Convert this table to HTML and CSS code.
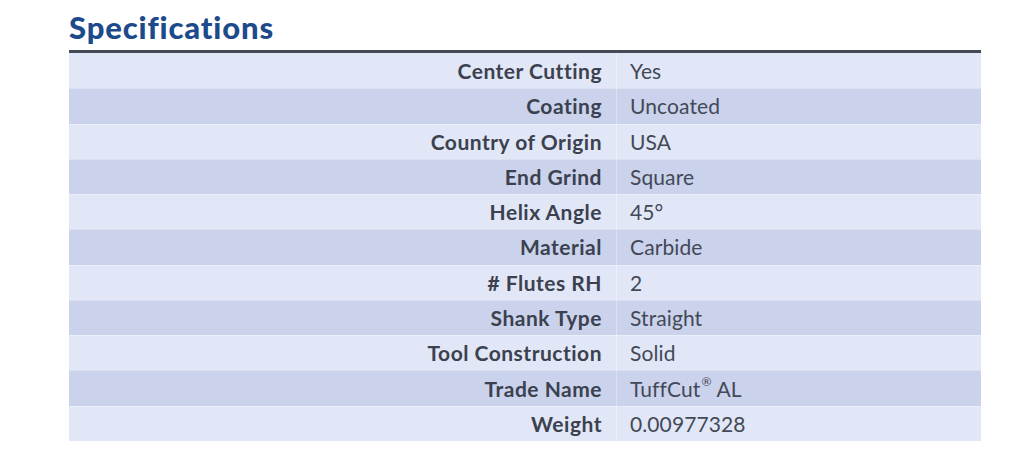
FILE: index.html
```html
<!DOCTYPE html>
<html lang="en">
<head>
<meta charset="utf-8">
<title>Specifications</title>
<link rel="stylesheet" href="styles.css">
</head>
<body>
<section class="specs">
  <h2 class="specs-title">Specifications</h2>
  <div class="specs-table">
    <div class="row"><div class="label">Center Cutting</div><div class="value">Yes</div></div>
    <div class="row"><div class="label">Coating</div><div class="value">Uncoated</div></div>
    <div class="row"><div class="label">Country of Origin</div><div class="value">USA</div></div>
    <div class="row"><div class="label">End Grind</div><div class="value">Square</div></div>
    <div class="row"><div class="label">Helix Angle</div><div class="value">45°</div></div>
    <div class="row"><div class="label">Material</div><div class="value">Carbide</div></div>
    <div class="row"><div class="label"># Flutes RH</div><div class="value">2</div></div>
    <div class="row"><div class="label">Shank Type</div><div class="value">Straight</div></div>
    <div class="row"><div class="label">Tool Construction</div><div class="value">Solid</div></div>
    <div class="row"><div class="label">Trade Name</div><div class="value">TuffCut<sup class="reg">®</sup> AL</div></div>
    <div class="row"><div class="label">Weight</div><div class="value">0.00977328</div></div>
  </div>
</section>
</body>
</html>
```

FILE: styles.css
```css
html, body {
  margin: 0;
  padding: 0;
  background: #ffffff;
}

body {
  font-family: "Lato", "Noto Sans", sans-serif;
  color: #3d4350;
}

.specs {
  width: 912px;
  margin-left: 69px;
  padding-top: 8px;
}

.specs-title {
  margin: 0;
  font-size: 31px;
  line-height: 38px;
  font-weight: 900;
  letter-spacing: 0.85px;
  color: #1d4a8b;
  height: 42px;
}

.specs-table {
  border-top: 3px solid #434955;
  display: grid;
  grid-auto-rows: 35.27px;
}

.row {
  display: grid;
  grid-template-columns: 547px 1fr;
  font-size: 21px;
}

.row:nth-child(odd) {
  background: #e1e7f7;
}

.row:nth-child(even) {
  background: #cad2ec;
}

.row + .row {
  box-shadow: inset 0 1px 0 rgba(255, 255, 255, 0.35);
}

.label,
.value {
  display: flex;
  align-items: center;
}

.label {
  justify-content: flex-end;
  padding-right: 14px;
  font-weight: 700;
  letter-spacing: 0.5px;
  color: #3b414e;
}

.value {
  padding-left: 14px;
  font-weight: 400;
  letter-spacing: 0.1px;
  color: #434956;
  box-shadow: inset 1px 0 0 rgba(255, 255, 255, 0.35);
}

.reg {
  font-size: 12px;
  line-height: 0;
  align-self: flex-start;
  margin-top: 12px;
  margin-left: 1px;
  margin-right: 5px;
}
```
